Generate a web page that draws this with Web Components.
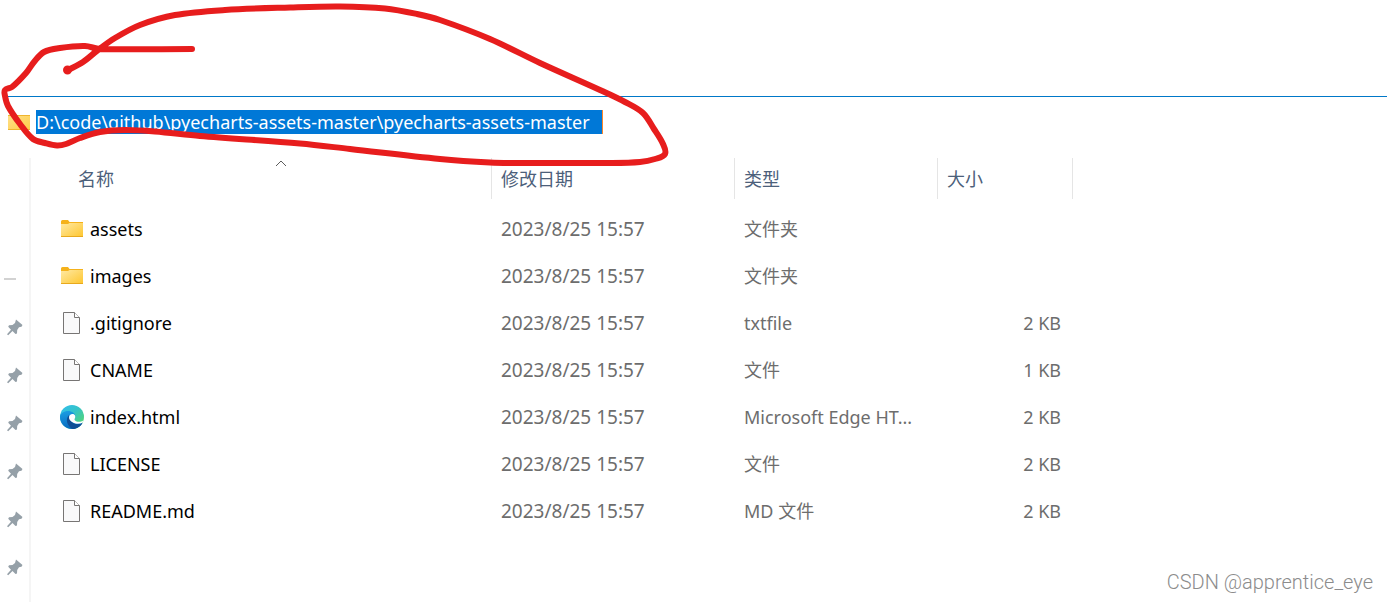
<!DOCTYPE html>
<html lang="zh-CN">
<head>
<meta charset="utf-8">
<title>pyecharts-assets-master</title>
<style>
  body { margin: 0; background: #fff; font-family: "Noto Sans", "Noto Sans CJK SC", sans-serif; font-size: 18px; }
</style>
</head>
<body>
<explorer-window>
  <address-bar path="D:\code\github\pyecharts-assets-master\pyecharts-assets-master"></address-bar>
  <quick-access slot="side" pins="6"></quick-access>
  <file-table slot="main"></file-table>
  <water-mark slot="overlay">CSDN @apprentice_eye</water-mark>
  <ink-note slot="overlay"></ink-note>
</explorer-window>
<script>
class ShadowElement extends HTMLElement {
  connectedCallback() {
    if (!this.shadowRoot) this.attachShadow({ mode: 'open' }).innerHTML = this.render();
  }
}

const icons = {
  folder: `<svg width="24" height="24" viewBox="0 0 24 24"><defs><linearGradient id="g" x1="0" y1="0" x2="1" y2="1"><stop offset="0" stop-color="#ffe9a3"/><stop offset="1" stop-color="#fec62e"/></linearGradient></defs><path d="M1 4.500q0-1.500 1.500-1.500H8L9.500 5H23v5H1z" fill="#f5b21b"/><path d="M1 7h7l1.500-1H23v14H1z" fill="url(#g)"/><path d="M1 19h22v1H1z" fill="#e8a91d"/></svg>`,
  crumb: `<svg width="24" height="24" viewBox="0 0 24 24"><defs><linearGradient id="g" x1="0" y1="0" x2="1" y2="1"><stop offset="0" stop-color="#ffe08a"/><stop offset="1" stop-color="#fecd48"/></linearGradient></defs><path d="M0 5h22v15H0z" fill="url(#g)"/><path d="M0 5h22v1H0zM0 19h22v1H0z" fill="#efb52f"/></svg>`,
  file: `<svg width="24" height="24" viewBox="0 0 24 24"><path d="M3.500 1.500h11l5 5v16h-16z" fill="#f9f9fa" stroke="#777574"/><path d="M14.500 1.500v5h5" fill="#fff" stroke="#777574"/></svg>`,
  edge: `<svg width="24" height="24" viewBox="0 0 24 24"><defs>
    <linearGradient id="a" x1="0" y1="0" x2="1" y2="1"><stop stop-color="#32bdf0"/><stop offset=".45" stop-color="#35c4c8"/><stop offset="1" stop-color="#5fdc55"/></linearGradient>
    <linearGradient id="b" x1=".3" y1="0" x2=".5" y2="1"><stop stop-color="#1b9de2"/><stop offset="1" stop-color="#0667bd"/></linearGradient></defs>
    <circle cx="12" cy="12" r="12" fill="url(#a)"/>
    <path d="M0 12C0 8.500 4 6 8 6c4 0 7.500 2.500 7.500 6L12 9.500l1 8.500 9.500-.5C20.500 21.500 16.500 24 12 24 5.500 24 0 18.500 0 12z" fill="url(#b)"/>
    <path d="M9 10c-4 4-2 11 3.500 14 4 0 8-2.500 10-6-4 2-8 1.500-10.500-1-2-2-3-4.500-3-7z" fill="#0f4f96"/>
    <path d="M9 12.500c0-2 1.500-3.500 3.500-3.500s3.500 1.800 2.500 4c-1 1.500-.5 2.500 1 3.200 2.500 1 5.500.5 7.300-.7l-.8 2.200c-3 1.500-7 1.300-9.500-.2-2.500-1.300-4-3-4-5z" fill="#fff"/></svg>`,
  pin: `<svg width="16" height="18" viewBox="0 0 16 18"><path d="M9 1.500l6.500 5.500-1 1.800-2.500.5-1.800 2.700-.2 3.500-1.500.5L5.500 13 1.200 17.200 0 16.300 4 11.800 1.200 8.800 2 7.200 5.500 7l2.500-2z" fill="#95a0a8"/></svg>`
};

customElements.define('file-icon', class extends ShadowElement {
  render() {
    return `<style>:host{display:block;flex:none}svg{display:block}</style>${icons[this.getAttribute('kind')]}`;
  }
});

customElements.define('explorer-window', class extends ShadowElement {
  render() {
    return `<style>
      :host { display: block; position: relative; min-height: 100vh; padding-top: 96px; box-sizing: border-box; overflow: hidden; }
      .body { display: grid; grid-template-columns: 31px minmax(0, 1fr); min-height: calc(100vh - 158px); }
    </style>
    <slot></slot>
    <div class="body"><slot name="side"></slot><slot name="main"></slot></div>
    <slot name="overlay"></slot>`;
  }
});

customElements.define('address-bar', class extends ShadowElement {
  render() {
    return `<style>
      :host { display: block; height: 62px; box-sizing: border-box; padding-left: 8px; }
      .line { height: 1px; background: #0078c8; }
      .row { display: flex; align-items: center; gap: 4px; height: 50px; }
      input { font: inherit; color: #fff; background: #0078d7; border: 0; border-right: 1px solid #ff8728; border-radius: 0;
        outline: 0; margin: 0; padding: 0; height: 24px; width: 567px; box-sizing: border-box; }
    </style>
    <div class="line"></div>
    <div class="row"><file-icon kind="crumb"></file-icon><input type="text" aria-label="地址" spellcheck="false" value="${this.getAttribute('path')}"></div>`;
  }
});

customElements.define('quick-access', class extends ShadowElement {
  render() {
    const n = Number(this.getAttribute('pins'));
    return `<style>
      :host { display: block; border-right: 2px solid #f5f5f5; }
      .rule { width: 12px; height: 2px; background: #d2d2d2; margin: 120px 0 0 4px; }
      ul { list-style: none; margin: 0; padding: 23px 0 0 7px; }
      li { height: 48px; display: flex; align-items: center; }
    </style>
    <div class="rule"></div>
    <ul>${'<li><file-icon kind="pin"></file-icon></li>'.repeat(n)}</ul>`;
  }
});

customElements.define('file-table', class extends ShadowElement {
  render() {
    const date = '2023/8/25 15:57';
    const rows = [
      ['folder', 'assets', '文件夹', ''],
      ['folder', 'images', '文件夹', ''],
      ['file', '.gitignore', 'txtfile', '2 KB'],
      ['file', 'CNAME', '文件', '1 KB'],
      ['edge', 'index.html', 'Microsoft Edge HT...', '2 KB'],
      ['file', 'LICENSE', '文件', '2 KB'],
      ['file', 'README.md', 'MD 文件', '2 KB']
    ];
    return `<style>
      :host { display: block; overflow: hidden; }
      table { border-collapse: separate; border-spacing: 0; table-layout: fixed; width: 1042px; line-height: 24px; }
      col.name { width: 461px; } col.date { width: 243px; } col.type { width: 203px; } col.size { width: 135px; }
      th { height: 41px; padding: 0 0 0 9px; box-sizing: border-box; text-align: left; font-weight: 400; color: #4c607a; border-right: 1px solid #e5e5e5; position: relative; }
      th:first-child { padding-left: 47px; }
      .sort { position: absolute; top: 2px; left: 39px; right: 0; margin: auto; display: block; }
      tbody::before { content: ""; display: block; height: 6px; }
      td { height: 47px; padding: 0 0 0 9px; box-sizing: border-box; color: #6d6d6d; white-space: nowrap; }
      td:first-child { padding-left: 29px; color: #000; }
      .entry { display: flex; align-items: center; gap: 6px; }
      .date { font-size: 19px; }
      .size { text-align: right; padding-right: 12px; }
    </style>
    <table>
      <colgroup><col class="name"><col class="date"><col class="type"><col class="size"></colgroup>
      <thead><tr>
        <th scope="col" aria-sort="ascending">名称<svg class="sort" width="12" height="7" viewBox="0 0 12 7"><path d="M1 6l5-5 5 5" fill="none" stroke="#5c5c5c"/></svg></th>
        <th scope="col">修改日期</th><th scope="col">类型</th><th scope="col">大小</th>
      </tr></thead>
      <tbody>${rows.map(([kind, name, type, size]) => `<tr>
        <td><div class="entry"><file-icon kind="${kind}"></file-icon><span>${name}</span></div></td>
        <td class="date">${date}</td><td>${type}</td><td class="size">${size}</td></tr>`).join('')}</tbody>
    </table>`;
  }
});

customElements.define('water-mark', class extends ShadowElement {
  render() {
    return `<style>
      :host { position: absolute; right: 14px; bottom: 8px; font: 300 20px/24px Roboto, "Liberation Sans", sans-serif; color: #8c8c8c; }
    </style><slot></slot>`;
  }
});

/* Freehand stroke: a smooth curve drawn through a list of points. */
customElements.define('ink-note', class extends ShadowElement {
  render() {
    const p = [[68,70],[83,62],[98,50],[115,38],[140,25],[175,15],[225,10],[290,7.5],[340,6.5],[385,8.5],[417,14],[440,20],[490,39],[540,63],[600,90],[625,102],[643,113],[654,129],[663,144],[665,154],[655,159],[640,162],[610,163],[520,163],[490,162.5],[440,159],[350,149],[300,143.5],[200,136],[155,131.5],[125,130],[100,132],[80,138],[66,144],[57,145.5],[45,143],[33,139],[20,124],[8,106],[5,96],[5,90],[12,87],[26,73],[34,62],[44,52],[60,48],[85,46],[100,49],[192,49]];
    let d = `M${p[0]}`;
    for (let i = 0; i < p.length - 1; i++) {
      const a = p[i - 1] || p[i], b = p[i], c = p[i + 1], e = p[i + 2] || c;
      const len = Math.hypot(c[0] - b[0], c[1] - b[1]) / 3;
      const t = (u, v, s) => { const l = Math.hypot(v[0] - u[0], v[1] - u[1]) || 1; return [(v[0] - u[0]) / l * s, (v[1] - u[1]) / l * s]; };
      const m = t(a, c, len), n = t(b, e, len);
      d += `C${b[0] + m[0]} ${b[1] + m[1]} ${c[0] - n[0]} ${c[1] - n[1]} ${c[0]} ${c[1]}`;
    }
    return `<style>:host{position:absolute;top:0;left:0;pointer-events:none}svg{display:block}</style>
      <svg width="680" height="175" viewBox="0 0 680 175" fill="none" stroke="#e71d1d" stroke-width="6" stroke-linecap="round" stroke-linejoin="round">
      <path d="${d}"/><circle cx="67.500" cy="70" r="1.500"/></svg>`;
  }
});
</script>
</body>
</html>
